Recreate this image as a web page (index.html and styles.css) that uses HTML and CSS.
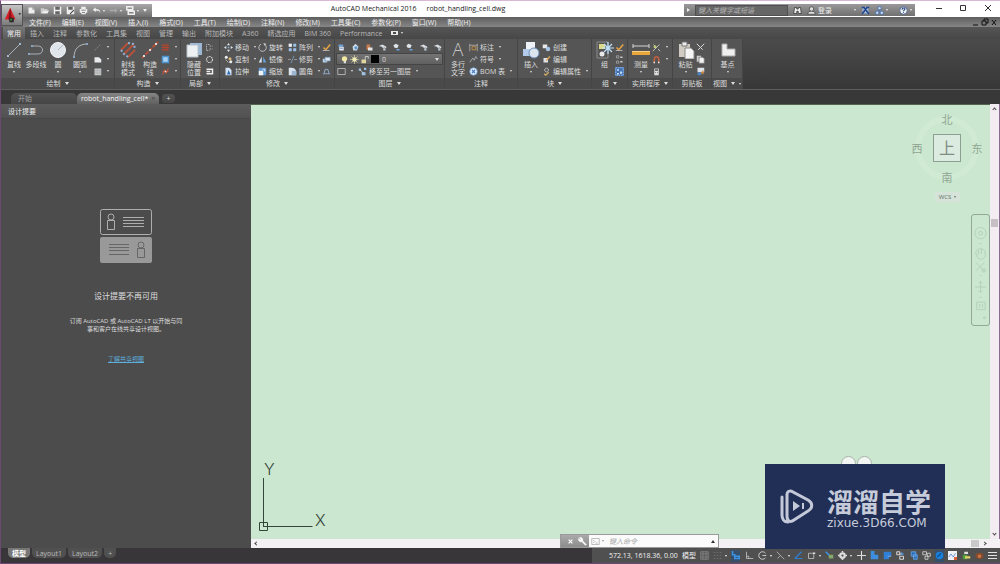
FILE: index.html
```html
<!DOCTYPE html>
<html lang="zh-CN">
<head>
  <meta charset="UTF-8">
  <meta name="viewport" content="width=device-width, initial-scale=1.0">
  <title>AutoCAD Mechanical 2016 - robot_handling_cell.dwg</title>
  <link rel="stylesheet" href="styles.css">
</head>
<body>
  <!-- icon sprite -->
  <svg class="sprite" aria-hidden="true">
    <symbol id="new" viewBox="0 0 12 12"><path d="M2 2h5l3 3v5H2z" fill="#eee"/><path d="M7 2v3h3" fill="#aaa"/></symbol>
    <symbol id="open" viewBox="0 0 12 12"><path d="M1 3h4l1 1h4v2H4L2 10H1z" fill="#ccc"/><path d="M4 6h8l-2 4H2z" fill="#eee"/></symbol>
    <symbol id="save" viewBox="0 0 12 12"><path d="M1 1h10v10H1z" fill="#eee"/><path d="M3 1h6v4H3zM3 7h6v4H3z" fill="#666"/></symbol>
    <symbol id="saveas" viewBox="0 0 12 12"><path d="M1 1h10v10H1z" fill="#eee"/><path d="M3 1h6v4H3z" fill="#666"/><path d="M5 10l5-5 1 1-5 5z" fill="#444"/></symbol>
    <symbol id="print" viewBox="0 0 12 12"><path d="M3 1h6v3h2v5H9v2H3V9H1V4h2z" fill="#eee"/><path d="M3 5h6v1H3zM4 8h4v1H4z" fill="#666"/></symbol>
    <symbol id="undo" viewBox="0 0 12 12"><path d="M1 5l4-3v2c4 0 6 2 6 5-1-2-3-3-6-3v2z" fill="#eee"/></symbol>
    <symbol id="redo" viewBox="0 0 12 12"><path d="M11 6L8 3v2H1v2h7v2z" fill="#aaa"/></symbol>
    <symbol id="work" viewBox="0 0 12 12"><path d="M1 1h8v4H1zM3 7h8v4H3z" fill="none" stroke="#eee" stroke-width="2"/></symbol>
    <symbol id="binoc" viewBox="0 0 12 12"><path d="M2 2h3v2h2V2h3l1 8H7V7H5v3H1z" fill="#eee" stroke="#333"/></symbol>
    <symbol id="user" viewBox="0 0 12 12"><circle cx="6" cy="4" r="3" fill="#ddd" stroke="#444"/><path d="M1 11c0-3 2-4 5-4s5 1 5 4z" fill="#ddd" stroke="#444"/></symbol>
    <symbol id="exchange" viewBox="0 0 12 12"><path d="M2 2h8v8H2z" fill="#9fb4d4"/><path d="M1 2h3l6 8h1M11 2H8L2 10H1" fill="none" stroke="#1f4690" stroke-width="2"/></symbol>
    <symbol id="a360" viewBox="0 0 12 12"><path d="M6 3v3M3 9l3-3 3 3" fill="none" stroke="#3f6cae"/><path d="M4 1h4v4H4zM1 7h4v4H1zM7 7h4v4H7z" fill="#cfdcf2" stroke="#3f6cae"/></symbol>
    <symbol id="help" viewBox="0 0 12 12"><circle cx="6" cy="6" r="5" fill="#eee" stroke="#35568f"/><path d="M4 5c0-3 4-3 4-1 0 1-2 1-2 3M6 8v1" fill="none" stroke="#24457f" stroke-width="1.4"/></symbol>

    <symbol id="line" viewBox="0 0 18 18"><path d="M3 15L15 3" stroke="#a9b0b6"/><path d="M2 14h2v2H2zM14 2h2v2h-2z" fill="#9fb9d4"/></symbol>
    <symbol id="pline" viewBox="0 0 18 18"><path d="M2 13h9c6 0 6-8 0-8H5" fill="none" stroke="#a9b0b6"/><path d="M4 4h2v2H4zM1 12h2v2H1z" fill="#8aa4bf"/></symbol>
    <symbol id="circle" viewBox="0 0 18 18"><circle cx="9" cy="9" r="7.5" fill="#dfe5ea" stroke="#f4f7fa"/><path d="M9 9l5-5" stroke="#a9b5c0"/></symbol>
    <symbol id="arc" viewBox="0 0 18 18"><path d="M3 16C3 8 8 3 16 3" fill="none" stroke="#b4bac0"/><path d="M2 15h2v2H2zM15 2h2v2h-2z" fill="#8aa4bf"/></symbol>
    <symbol id="cline" viewBox="0 0 12 12"><path d="M2 10l8-8" stroke="#8c8c8c" stroke-dasharray="3 1"/></symbol>
    <symbol id="poly" viewBox="0 0 12 12"><path d="M2 3h6l3 3v4H2z" fill="#e8eaec"/></symbol>
    <symbol id="hatch" viewBox="0 0 12 12"><path d="M2 2h9v9H2z" fill="#c7c9cb"/><path d="M2 5h9M2 8h9" stroke="#9b9ea1"/></symbol>
    <symbol id="rays" viewBox="0 0 18 18"><path d="M2 9l7-7M5 13L15 3M9 16l7-7" stroke="#b5503a" stroke-width="2"/><path d="M2 9l3 4 4 3M9 2l6 1 1 6" fill="none" stroke="#8fb0d8" stroke-dasharray="2 2" stroke-width="2"/></symbol>
    <symbol id="xline" viewBox="0 0 18 18"><path d="M1 17L17 1" stroke="#b5503a" stroke-width="2" stroke-dasharray="4 1"/><path d="M2 14h2v2H2zM8 8h2v2H8zM14 2h2v2h-2z" fill="#ddd"/></symbol>
    <symbol id="red1" viewBox="0 0 12 12"><path d="M1 3h10M1 6h10M1 9h10M4 1v10M8 1v10" stroke="#b5452e" stroke-width="1.3"/></symbol>
    <symbol id="bluebox" viewBox="0 0 12 12"><path d="M2 2h8v8H2z" fill="#a9d2f2" stroke="#4b94cf" stroke-width="2"/></symbol>
    <symbol id="red2" viewBox="0 0 12 12"><path d="M2 10l3-6 2 4 3-6M2 6h8" fill="none" stroke="#c4553c" stroke-width="1.5"/><path d="M5 5h2v2H5z" fill="#eee"/></symbol>
    <symbol id="hide" viewBox="0 0 18 18"><path d="M5 2h12v12H5z" fill="#9db8d3"/><path d="M2 4h11v12H2z" fill="#eef1f4" stroke="#b7c2cc"/></symbol>
    <symbol id="det1" viewBox="0 0 12 12"><path d="M6 2H2v8h4M6 4h4M6 8h4" fill="none" stroke="#ccc" stroke-dasharray="2 1"/></symbol>
    <symbol id="det2" viewBox="0 0 12 12"><circle cx="6" cy="6" r="4" fill="none" stroke="#ddd" stroke-width="1.5" stroke-dasharray="2 1"/></symbol>
    <symbol id="det3" viewBox="0 0 12 12"><path d="M2 3h8v6H2M2 6h5" fill="none" stroke="#eee" stroke-width="2"/></symbol>
    <symbol id="move" viewBox="0 0 12 12"><path d="M6 0l2 3H4zM6 12l2-3H4zM0 6l3-2v4zM12 6L9 4v4z" fill="#e3e9ef"/><path d="M5 5h2v2H5z" fill="#8ab4e0"/></symbol>
    <symbol id="copy" viewBox="0 0 12 12"><circle cx="3" cy="3" r="2" fill="#eee"/><circle cx="8" cy="5" r="2" fill="#d9b673"/><circle cx="9" cy="9" r="2" fill="#eee"/><path d="M2 6l4 4" stroke="#ccc"/></symbol>
    <symbol id="stretch" viewBox="0 0 12 12"><path d="M2 1h5l3 3v7H2z" fill="#d5e4f4"/><path d="M4 10l2-6 3 6z" fill="#2e6eb3"/></symbol>
    <symbol id="rotate" viewBox="0 0 12 12"><path d="M9 2a5 5 0 1 1-5-.5" fill="none" stroke="#b9bec3" stroke-width="1.3"/><path d="M7 0l4 1-2 3z" fill="#ccc"/></symbol>
    <symbol id="mirror" viewBox="0 0 12 12"><path d="M5 2v8H1z" fill="#dce6f0"/><path d="M7 2v8h4z" fill="#69a0d8"/></symbol>
    <symbol id="scale" viewBox="0 0 12 12"><path d="M1 1h10v10H1z" fill="#5d96d0"/><path d="M1 5h6v6H1z" fill="#f0f3f6"/><path d="M6 3h3v3" fill="none" stroke="#fff"/></symbol>
    <symbol id="array" viewBox="0 0 12 12"><path d="M1 1h4v4H1zM7 1h4v4H7zM1 7h4v4H1zM7 7h4v4H7z" fill="#9cc2ea"/><path d="M1 1h4v4H1z" fill="#eee"/></symbol>
    <symbol id="trim" viewBox="0 0 12 12"><path d="M0 6h4M8 6h4" stroke="#aaa"/><path d="M4 11l4-10" stroke="#7ea6d0"/></symbol>
    <symbol id="fillet" viewBox="0 0 12 12"><path d="M1 1h4c4 0 6 3 6 6v4H1z" fill="#dbe4ed"/><path d="M5 5h6v6H5z" fill="#9bb7d3"/></symbol>
    <symbol id="edit" viewBox="0 0 12 12"><path d="M2 6l3 3 6-7" fill="none" stroke="#e8a445" stroke-width="2"/><path d="M1 10h9" stroke="#ccc"/></symbol>
    <symbol id="cloud" viewBox="0 0 12 12"><path d="M1 5h6v5H1z" fill="#b7cfe7"/><path d="M4 3h7v5H4z" fill="#dfe8f0" stroke="#6f90b0"/></symbol>
    <symbol id="offset" viewBox="0 0 12 12"><path d="M1 9h10M3 9c0-8 6-8 6 0" fill="none" stroke="#8ca5bf" stroke-width="1.4"/></symbol>
    <symbol id="layer" viewBox="0 0 12 12"><path d="M2 2h6v3H2z" fill="#6fa3d8"/><path d="M3 5h6v5H3z" fill="#e3e9ee"/><path d="M4 7h4M8 3l2 2" stroke="#4b83bd"/></symbol>
    <symbol id="layer1" viewBox="0 0 12 12"><path d="M6 1l4 4-2 5H3L2 5z" fill="#cddbe8"/><path d="M4 6l3-2 2 3-3 2z" fill="#5b93cc"/></symbol>
    <symbol id="layer2" viewBox="0 0 12 12"><path d="M2 2h5v7H2z" fill="#c77b4c"/><path d="M4 6h6v4H4z" fill="#e4e4e4"/></symbol>
    <symbol id="layer3" viewBox="0 0 12 12"><path d="M1 4l5-2 5 3v2L8 6 7 7 5 5z" fill="#d9dee3"/><path d="M7 7h3v3H7z" fill="#c3ccd4"/></symbol>
    <symbol id="layer4" viewBox="0 0 12 12"><path d="M2 3l3-2 4 2-2 4-4-1z" fill="#dfe4e9"/><path d="M6 8h4v2H6z" fill="#6fa3d8"/></symbol>
    <symbol id="bulb" viewBox="0 0 12 12"><circle cx="6" cy="5" r="3.5" fill="#f3e9a2"/><path d="M5 8h3v3H5z" fill="#ddd"/></symbol>
    <symbol id="sun" viewBox="0 0 12 12"><path d="M6 0v12M0 6h12M2 2l8 8M10 2l-8 8" stroke="#cfcf9a"/><circle cx="6" cy="6" r="3" fill="#f1ecb8"/></symbol>
    <symbol id="lock" viewBox="0 0 12 12"><path d="M2 6h6v5H2z" fill="#e0d79c"/><path d="M7 6V2h4v3" fill="none" stroke="#ddd"/></symbol>
    <symbol id="rect" viewBox="0 0 12 12"><path d="M1 2h10v8H1z" fill="none" stroke="#c9c9c9"/></symbol>
    <symbol id="tolayer" viewBox="0 0 12 12"><path d="M1 2h3v3H1zM8 1h3v3H8zM5 7h5v4H5z" fill="#9dc2e6"/><path d="M3 4l4 4" stroke="#ddd"/></symbol>
    <symbol id="dim" viewBox="0 0 12 12"><path d="M1 1v10M11 1v10M1 3h10" stroke="#bbb"/><path d="M4 5h5v4H4z" fill="none" stroke="#d9a13e"/></symbol>
    <symbol id="sym" viewBox="0 0 12 12"><path d="M1 10l4-6 2 3 2-5 2 3" fill="none" stroke="#b8bdc2"/></symbol>
    <symbol id="bom" viewBox="0 0 12 12"><circle cx="6" cy="6" r="5" fill="#dfeaf8" stroke="#6b9ddb"/><path d="M4 4l4 4M8 4L4 8" stroke="#4a7dc4" stroke-width="1.5"/></symbol>
    <symbol id="insert" viewBox="0 0 18 18"><path d="M4 1h9v7H4z" fill="#eef1f5"/><path d="M1 8h8v7H1z" fill="#b2cbea"/><circle cx="12" cy="12" r="5" fill="#dce4ee" stroke="#6d90ba"/></symbol>
    <symbol id="create" viewBox="0 0 12 12"><path d="M1 2h6v5H1z" fill="#e6e9ec"/><circle cx="8" cy="8" r="3" fill="#a6c4e4"/></symbol>
    <symbol id="bedit" viewBox="0 0 12 12"><path d="M2 4h6v6H2z" fill="#dfe3e8"/><path d="M5 7l5-6 1 2-5 5z" fill="#e0a94c"/></symbol>
    <symbol id="attr" viewBox="0 0 12 12"><path d="M6 1l3 3-3 3-3-3z" fill="none" stroke="#ddd"/><path d="M3 9l2 2 4-4" fill="none" stroke="#d6b065" stroke-width="1.5"/></symbol>
    <symbol id="group" viewBox="0 0 18 18"><path d="M1 1h11v16H1z" fill="none" stroke="#8c8c8c"/><path d="M3 3h6v5H3z" fill="#dcd98a"/><circle cx="6" cy="13" r="2.5" fill="#e8e8e8"/><path d="M12 1v12M6 7h12M8 3l8 8M16 3l-8 8" stroke="#bfe2ff" stroke-width="1.2"/></symbol>
    <symbol id="g2" viewBox="0 0 12 12"><path d="M2 1h3v3H2zM2 8h3v3H2z" fill="none" stroke="#aaa"/><path d="M7 3h3M7 9h3" stroke="#ccc" stroke-width="2"/></symbol>
    <symbol id="g3" viewBox="0 0 12 12"><path d="M0 0h12v12H0z" fill="#3f71b5"/><path d="M1 1h10v10H1z" fill="none" stroke="#b7d3f5" stroke-dasharray="2 1"/><path d="M3 3h2v2H3zM7 6h2v3H7zM3 8h2v2H3z" fill="#fff"/></symbol>
    <symbol id="measure" viewBox="0 0 18 18"><path d="M1 5h16M1 3v4M17 3v4" stroke="#d5d5d5"/><path d="M0 10h18v4H0z" fill="#e8a63a"/><path d="M0 10h18v1H0z" fill="#f7cf85"/></symbol>
    <symbol id="pts" viewBox="0 0 12 12"><path d="M1 11L10 2M2 2l2 2M8 8l3 3" stroke="#ddd"/><circle cx="4" cy="5" r="2" fill="#bfc879"/></symbol>
    <symbol id="magnet" viewBox="0 0 12 12"><path d="M3 10V6c0-5 6-5 6 0v4" fill="none" stroke="#c5603f" stroke-width="2"/><path d="M2 9h2v2H2zM8 9h2v2H8z" fill="#eee"/></symbol>
    <symbol id="calc" viewBox="0 0 12 12"><path d="M3 2h6v9H3z" fill="#ddd"/><path d="M4 3h4v2H4zM4 7h1v1H4zM7 7h1v1H7z" fill="#555"/></symbol>
    <symbol id="paste" viewBox="0 0 18 18"><path d="M2 3h11v13H2z" fill="#cfcac2"/><path d="M5 1h5v4H5z" fill="#eee" stroke="#777"/><path d="M8 7h6l3 3v8H8z" fill="#f4f4f4" stroke="#888"/></symbol>
    <symbol id="cut" viewBox="0 0 12 12"><path d="M1 1l5 5 5-5M6 6L3 9M6 6l3 3" fill="none" stroke="#ddd" stroke-width="1.3"/></symbol>
    <symbol id="clip" viewBox="0 0 12 12"><path d="M1 1h6v8H1z" fill="#ccc"/><path d="M4 3h5l2 2v6H4z" fill="#f2f2f2" stroke="#777"/></symbol>
    <symbol id="match" viewBox="0 0 12 12"><path d="M2 1h9v6H2z" fill="#dfe3e8"/><path d="M2 7h5v4H2z" fill="#4d83c1"/><path d="M6 8l4-4v6z" fill="#d18a42"/></symbol>
    <symbol id="base" viewBox="0 0 18 18"><path d="M3 3h5v5h8v7H3z" fill="#f0f0f0" stroke="#aaa"/></symbol>

    <symbol id="grid" viewBox="0 0 12 12"><path d="M1 1h10v10H1zM1 4h10M1 8h10M4 1v10M8 1v10" fill="none" stroke="#8c8c8c"/></symbol>
    <symbol id="snap" viewBox="0 0 12 12"><path d="M1 2h10M1 6h10M1 10h10" stroke="#777" stroke-dasharray="2 2"/></symbol>
    <symbol id="dyn" viewBox="0 0 12 12"><path d="M2 0v5h4M5 7h6v3H5z" fill="none" stroke="#3a93e6" stroke-width="2"/></symbol>
    <symbol id="ortho" viewBox="0 0 12 12"><path d="M2 1v9h9M2 7h3v3" fill="none" stroke="#ccc"/></symbol>
    <symbol id="polar" viewBox="0 0 12 12"><path d="M10 3a5 5 0 1 0 0 6M6 6h5" fill="none" stroke="#ccc" stroke-width="1.3"/></symbol>
    <symbol id="iso" viewBox="0 0 12 12"><path d="M1 1l10 10M6 6L2 10" stroke="#aaa" stroke-width="1.3"/></symbol>
    <symbol id="otrack" viewBox="0 0 12 12"><path d="M1 10h10M1 10l9-9" stroke="#2e7fd6" stroke-width="1.5"/></symbol>
    <symbol id="osnap" viewBox="0 0 12 12"><path d="M2 3h7v7H2z" fill="none" stroke="#ccc"/><path d="M8 2h3v2H8z" fill="#ddd"/></symbol>
    <symbol id="ann" viewBox="0 0 12 12"><path d="M1 1l6 6" stroke="#3a93e6" stroke-width="2"/><path d="M5 5h6v5H5z" fill="#85a86a"/></symbol>
    <symbol id="gear" viewBox="0 0 12 12"><circle cx="6" cy="6" r="3" fill="none" stroke="#ddd" stroke-width="3"/><path d="M6 0v2M6 10v2M0 6h2M10 6h2" stroke="#ddd" stroke-width="2"/></symbol>
    <symbol id="plus" viewBox="0 0 12 12"><path d="M6 0v12M0 6h12" stroke="#ddd" stroke-width="1.5"/></symbol>
    <symbol id="sq1" viewBox="0 0 12 12"><path d="M1 0h5v5h5v6H1z" fill="#3c8ee0"/></symbol>
    <symbol id="sq2" viewBox="0 0 12 12"><path d="M1 1h10v6H8v4H1z" fill="#2f7fd4"/><path d="M6 7h5" stroke="#8fc1f4"/></symbol>
    <symbol id="sq3" viewBox="0 0 12 12"><path d="M1 1h4v4H1zM4 4h4M5 7h5v4H5z" fill="none" stroke="#ddd" stroke-width="1.3"/><path d="M7 2l3 3" stroke="#4b94dd" stroke-width="2"/></symbol>
    <symbol id="sq4" viewBox="0 0 12 12"><path d="M3 1h6v6H3zM6 5h5v6H6z" fill="#2e70ba" stroke="#6cabed"/></symbol>
    <symbol id="sq5" viewBox="0 0 12 12"><path d="M1 1h5v4H1zM7 3h4v4H7zM4 7h4v4H4z" fill="none" stroke="#ccc" stroke-width="1.2"/></symbol>
    <symbol id="hw" viewBox="0 0 12 12"><circle cx="6" cy="6" r="5" fill="#1b82dc"/><path d="M3 8l5-5" stroke="#0d5196" stroke-width="2"/></symbol>
    <symbol id="chart" viewBox="0 0 12 12"><path d="M0 0h12v12H0z" fill="#eef2f8"/><path d="M1 8l3-4 3 4 3-5" fill="none" stroke="#4a7bd0"/><path d="M8 8h4v4H8z" fill="#d9603a"/></symbol>
    <symbol id="bar" viewBox="0 0 12 12"><path d="M3 1h5v3H3z" fill="#ddd"/><path d="M1 5h6v6H1z" fill="#4f9c3c"/><path d="M4 7h7v3H4z" fill="#e3d16a"/></symbol>
    <symbol id="box" viewBox="0 0 12 12"><path d="M1 4l5-2 5 2v5l-5 2-5-2z" fill="#8a4a2c"/><path d="M4 5h4v4H4z" fill="#c87946"/></symbol>
    <symbol id="menu" viewBox="0 0 12 12"><path d="M0 2h12M0 6h12M0 10h12" stroke="#e2e2e2" stroke-width="1.5"/></symbol>
    <symbol id="wrench" viewBox="0 0 12 12"><path d="M1 2a3 3 0 0 0 4 4l5 5 1-1-5-5a3 3 0 0 0-4-4l2 2-1 1z" fill="#fff" stroke="#fff"/></symbol>
    <symbol id="prompt" viewBox="0 0 12 12"><path d="M1 2h10v8H1zM3 4l2 2-2 2M6 8h3" fill="none" stroke="#aaa"/></symbol>
  </svg>

  <header class="top">
    <button class="app-button" aria-label="应用程序菜单">
      <svg viewBox="0 0 22 22"><path d="M9 3l6 13H3z" fill="#d3222a"/><path d="M9 3l2 13H7z" fill="#8d0f16"/><path d="M8 14h5v5H8z" fill="#2a2a2a"/><path d="M9 15h2v2H9z" fill="#3f8a3f"/><path d="M18 9h3l-1.500 2z" fill="#222"/></svg>
    </button>
    <div class="top-rows">
      <div class="title-row">
        <div class="quick">
          <button><svg><use href="#new"/></svg></button>
          <button><svg><use href="#open"/></svg></button>
          <button><svg><use href="#save"/></svg></button>
          <button><svg><use href="#saveas"/></svg></button>
          <button><svg><use href="#print"/></svg></button>
          <button><svg><use href="#undo"/></svg><i class="caret"></i></button>
          <button><svg><use href="#redo"/></svg><i class="caret"></i></button>
          <button><svg><use href="#work"/></svg><i class="caret"></i></button>
          <button><i class="caret wide"></i></button>
        </div>
        <h1 class="title"><span>AutoCAD Mechanical 2016</span><span>robot_handling_cell.dwg</span></h1>
        <div class="info">
          <i class="caret right"></i>
          <input class="search" type="text" aria-label="搜索" placeholder="键入关键字或短语">
          <button><svg><use href="#binoc"/></svg></button>
          <button class="login"><svg><use href="#user"/></svg>登录</button>
          <button><i class="caret"></i></button>
          <button><svg><use href="#exchange"/></svg></button>
          <button><svg><use href="#a360"/></svg><i class="caret"></i></button>
          <button class="help"><svg><use href="#help"/></svg><i class="caret"></i></button>
        </div>
        <div class="window">
          <button aria-label="最小化"><svg viewBox="0 0 8 8"><path d="M1 4.500h6"/></svg></button>
          <button aria-label="最大化"><svg viewBox="0 0 8 8"><path d="M1.500 1.500h5v5h-5z"/></svg></button>
          <button aria-label="关闭"><svg viewBox="0 0 8 8"><path d="M1 1l6 6M7 1L1 7"/></svg></button>
        </div>
      </div>
      <nav class="menu-row">
        <button>文件(F)</button><button>编辑(E)</button><button>视图(V)</button><button>插入(I)</button><button>格式(O)</button><button>工具(T)</button><button>绘制(D)</button><button>注释(N)</button><button>修改(M)</button><button>工具集(C)</button><button>参数化(P)</button><button>窗口(W)</button><button>帮助(H)</button>
        <div class="doc-window">
          <button aria-label="最小化"><svg viewBox="0 0 8 8"><path d="M1 7h5"/></svg></button>
          <button aria-label="还原"><svg viewBox="0 0 8 8"><path d="M3 3V1h4v4H5M1 3h4v4H1z"/></svg></button>
          <button aria-label="关闭"><svg viewBox="0 0 8 8"><path d="M2 2l4 5M6 2L2 7"/></svg></button>
        </div>
      </nav>
    </div>
  </header>

  <nav class="ribbon-tabs">
    <button class="active">常用</button><button>插入</button><button>注释</button><button>参数化</button><button>工具集</button><button>视图</button><button>管理</button><button>输出</button><button>附加模块</button><button>A360</button><button>精选应用</button><button>BIM 360</button><button>Performance</button>
    <button class="ribbon-toggle" aria-label="功能区显示"><span></span><i class="caret"></i></button>
  </nav>

  <div class="ribbon">
    <section class="panel draw">
      <div class="tools">
        <button class="big"><svg><use href="#line"/></svg>直线<i class="caret"></i></button>
        <button class="big"><svg><use href="#pline"/></svg>多段线</button>
        <button class="big"><svg><use href="#circle"/></svg>圆<i class="caret"></i></button>
        <button class="big"><svg><use href="#arc"/></svg>圆弧<i class="caret"></i></button>
        <div class="stack">
          <button><svg><use href="#cline"/></svg><i class="caret"></i></button>
          <button><svg><use href="#poly"/></svg><i class="caret"></i></button>
          <button><svg><use href="#hatch"/></svg><i class="caret"></i></button>
        </div>
      </div>
      <h2>绘制<i class="caret wide"></i></h2>
    </section>

    <section class="panel construct">
      <div class="tools">
        <button class="big"><svg><use href="#rays"/></svg>射线<br>模式</button>
        <button class="big"><svg><use href="#xline"/></svg>构造<br>线</button>
        <div class="stack">
          <button><svg><use href="#red1"/></svg><i class="caret"></i></button>
          <button><svg><use href="#bluebox"/></svg><i class="caret"></i></button>
          <button><svg><use href="#red2"/></svg><i class="caret"></i></button>
        </div>
      </div>
      <h2>构造<i class="caret wide"></i></h2>
    </section>

    <section class="panel detail">
      <div class="tools">
        <button class="big"><svg><use href="#hide"/></svg>隐藏<br>位置</button>
        <div class="stack">
          <button><svg><use href="#det1"/></svg></button>
          <button><svg><use href="#det2"/></svg></button>
          <button><svg><use href="#det3"/></svg></button>
        </div>
      </div>
      <h2>局部<i class="caret wide"></i></h2>
    </section>

    <section class="panel modify">
      <div class="tools">
        <div class="stack">
          <button><svg><use href="#move"/></svg>移动<i class="caret"></i></button>
          <button><svg><use href="#copy"/></svg>复制<i class="caret"></i></button>
          <button><svg><use href="#stretch"/></svg>拉伸</button>
        </div>
        <div class="stack">
          <button><svg><use href="#rotate"/></svg>旋转</button>
          <button><svg><use href="#mirror"/></svg>镜像</button>
          <button><svg><use href="#scale"/></svg>缩放</button>
        </div>
        <div class="stack">
          <button><svg><use href="#array"/></svg>阵列<i class="caret"></i></button>
          <button><svg><use href="#trim"/></svg>修剪<i class="caret"></i></button>
          <button><svg><use href="#fillet"/></svg>圆角<i class="caret"></i></button>
        </div>
        <div class="stack">
          <button><svg><use href="#edit"/></svg></button>
          <button><svg><use href="#cloud"/></svg></button>
          <button><svg><use href="#offset"/></svg></button>
        </div>
      </div>
      <h2>修改<i class="caret wide"></i></h2>
    </section>

    <section class="panel layers">
      <div class="stack">
        <div class="layer-tools">
          <button><svg><use href="#layer"/></svg></button>
          <button><svg><use href="#layer1"/></svg></button>
          <button><svg><use href="#layer2"/></svg></button>
          <button><svg><use href="#layer3"/></svg></button>
          <button><svg><use href="#layer4"/></svg></button>
          <button><svg><use href="#layer4"/></svg></button>
          <button><svg><use href="#layer3"/></svg></button>
          <button><svg><use href="#layer3"/></svg></button>
        </div>
        <div class="layer-combo">
          <svg><use href="#bulb"/></svg>
          <svg><use href="#sun"/></svg>
          <svg><use href="#lock"/></svg>
          <span class="swatch"></span>
          <select aria-label="图层"><option>0</option></select>
          <i class="caret wide"></i>
        </div>
        <div class="layer-move">
          <button><svg><use href="#rect"/></svg><i class="caret"></i></button>
          <button><svg><use href="#tolayer"/></svg>移至另一图层<i class="caret"></i></button>
        </div>
      </div>
      <h2>图层<i class="caret wide"></i></h2>
    </section>

    <section class="panel annotate">
      <div class="tools">
        <button class="big"><span class="letter">A</span>多行<br>文字</button>
        <div class="stack">
          <button><svg><use href="#dim"/></svg>标注<i class="caret"></i></button>
          <button><svg><use href="#sym"/></svg>符号<i class="caret"></i></button>
          <button><svg><use href="#bom"/></svg>BOM 表<i class="caret"></i></button>
        </div>
      </div>
      <h2>注释</h2>
    </section>

    <section class="panel block">
      <div class="tools">
        <button class="big"><svg><use href="#insert"/></svg>插入<i class="caret"></i></button>
        <div class="stack">
          <button><svg><use href="#create"/></svg>创建</button>
          <button><svg><use href="#bedit"/></svg>编辑</button>
          <button><svg><use href="#attr"/></svg>编辑属性<i class="caret"></i></button>
        </div>
      </div>
      <h2>块<i class="caret wide"></i></h2>
    </section>

    <section class="panel groups">
      <div class="tools">
        <button class="big"><svg><use href="#group"/></svg>组</button>
        <div class="stack">
          <button><svg><use href="#edit"/></svg></button>
          <button><svg><use href="#g2"/></svg></button>
          <button><svg><use href="#g3"/></svg></button>
        </div>
      </div>
      <h2>组<i class="caret wide"></i></h2>
    </section>

    <section class="panel utils">
      <div class="tools">
        <button class="big"><svg><use href="#measure"/></svg>测量<i class="caret"></i></button>
        <div class="stack">
          <button><svg><use href="#pts"/></svg><i class="caret"></i></button>
          <button><svg><use href="#magnet"/></svg><i class="caret"></i></button>
          <button><svg><use href="#calc"/></svg></button>
        </div>
      </div>
      <h2>实用程序<i class="caret wide"></i></h2>
    </section>

    <section class="panel clipboard">
      <div class="tools">
        <button class="big"><svg><use href="#paste"/></svg>粘贴<i class="caret"></i></button>
        <div class="stack">
          <button><svg><use href="#cut"/></svg></button>
          <button><svg><use href="#clip"/></svg></button>
          <button><svg><use href="#match"/></svg></button>
        </div>
      </div>
      <h2>剪贴板</h2>
    </section>

    <section class="panel view">
      <div class="tools">
        <button class="big"><svg><use href="#base"/></svg>基点<i class="caret"></i></button>
      </div>
      <h2>视图<i class="caret wide"></i><i class="caret"></i></h2>
    </section>
  </div>

  <div class="file-tabs">
    <button class="file-tab">开始</button>
    <button class="file-tab current">robot_handling_cell*<span class="close">×</span></button>
    <button class="file-tab add" aria-label="新建">+</button>
  </div>

  <main class="workspace">
    <aside class="feed">
      <h2 class="feed-title">设计提要</h2>
      <div class="feed-body">
        <svg class="feed-icon" viewBox="0 0 52 54">
          <g fill="none" stroke="#aeaeae">
            <rect x=".5" y=".5" width="51" height="25" rx="2"/>
            <path d="M7.500 11.500h7v9h-7zM23 8.500h21M23 11.500h21M23 14.500h21M23 17.500h21"/>
            <circle cx="11" cy="8" r="3"/>
          </g>
          <rect y="28" width="52" height="26" rx="2" fill="#999"/>
          <g fill="none" stroke="#666">
            <path d="M37.500 39.500h7v9h-7zM9 35.500h20M9 38.500h20M9 41.500h20M9 45.500h20"/>
            <circle cx="41" cy="36" r="3"/>
          </g>
        </svg>
        <h3>设计提要不再可用</h3>
        <p>订阅 AutoCAD 或 AutoCAD LT 以开始与同<br>事和客户在线共享设计视图。</p>
        <a href="#">了解共享视图</a>
      </div>
    </aside>

    <section class="drawing">
      <div class="canvas">
        <svg class="ucs" viewBox="0 0 80 80" aria-label="UCS">
          <path d="M7.500 24v49M7.500 72.500h49M3.500 68.500h8v8h-8z" fill="none" stroke="#34453a"/>
          <text x="8" y="21">Y</text>
          <text x="59" y="72">X</text>
        </svg>
        <div class="compass">
          <span class="ring"></span>
          <span class="north">北</span>
          <span class="west">西</span>
          <button class="cube">上</button>
          <span class="east">东</span>
          <span class="south">南</span>
        </div>
        <button class="wcs">WCS<i class="caret"></i></button>
        <div class="navbar">
          <svg viewBox="0 0 18 112">
            <g fill="none" stroke="#b4d0b9">
              <circle cx="9" cy="17" r="6"/><circle cx="9" cy="17" r="2"/><path d="M8 28h2"/>
              <path d="M4 38c0-6 10-6 10 0v4c-3 4-8 3-9-1zM7 35v5M10 34v5"/>
              <path d="M4 48l9 9M13 48l-9 9M11 55h3v3h-3zM8 62h2"/>
              <path d="M9 68v12M3 74h12M7 70l2-2 2 2M7 78l2 2 2-2M8 85h2"/>
              <path d="M5 90h9v8H5zM8 92v4M11 92v4M12 106h3l-2 2z"/>
            </g>
          </svg>
        </div>
        <div class="ears"><span></span><span></span></div>
      </div>
      <div class="vscroll"><i class="arrow up"></i><span class="thumb"></span><i class="arrow down"></i></div>
      <div class="hscroll"><i class="arrow left"></i><span class="thumb"></span><i class="arrow right"></i></div>
      <div class="command">
        <div class="command-grip">
          <button aria-label="关闭"><svg viewBox="0 0 8 8"><path d="M1 1l6 6M7 1L1 7" stroke="#fff" stroke-width="2"/></svg></button>
          <button aria-label="自定义"><svg><use href="#wrench"/></svg></button>
        </div>
        <svg class="prompt"><use href="#prompt"/></svg><i class="caret"></i>
        <input type="text" aria-label="命令" placeholder="键入命令">
        <i class="caret flip"></i>
      </div>
      <div class="watermark">
        <svg viewBox="0 0 34 36"><path d="M8 33C4 33 2 30 2 26V8M7 24V6c0-4 3-5 6-3l15 8c5 3 5 8 0 11L14 31c-4 3-7 1-7-4V17" fill="none" stroke="#c3c9d8" stroke-width="3" stroke-linecap="round"/><path d="M13 12l7 5-7 5z" fill="#c3c9d8"/><path d="M23 14v6" stroke="#c3c9d8" stroke-width="2"/></svg>
        <div><strong>溜溜自学</strong><span>zixue.3D66.COM</span></div>
      </div>
    </section>
  </main>

  <footer class="bottom">
    <div class="layout-tabs">
      <button class="active">模型</button><button>Layout1</button><button>Layout2</button><button>+</button>
    </div>
    <div class="status">
      <span class="coords">572.13, 1618.36, 0.00</span>
      <button class="model">模型</button>
      <button><svg><use href="#grid"/></svg></button>
      <button><svg><use href="#snap"/></svg><i class="caret"></i></button>
      <button class="on"><svg><use href="#dyn"/></svg></button>
      <button><svg><use href="#ortho"/></svg></button>
      <button><svg><use href="#polar"/></svg><i class="caret"></i></button>
      <button><svg><use href="#iso"/></svg><i class="caret"></i></button>
      <button><svg><use href="#otrack"/></svg></button>
      <button><svg><use href="#osnap"/></svg><i class="caret"></i></button>
      <button><svg><use href="#ann"/></svg></button>
      <button><svg><use href="#gear"/></svg><i class="caret"></i></button>
      <button><svg><use href="#plus"/></svg></button>
      <button><svg><use href="#sq1"/></svg></button>
      <button><svg><use href="#sq2"/></svg></button>
      <button><svg><use href="#sq3"/></svg></button>
      <button><svg><use href="#sq4"/></svg></button>
      <button><svg><use href="#sq5"/></svg></button>
      <button class="on"><svg><use href="#hw"/></svg></button>
      <button><svg><use href="#chart"/></svg></button>
      <button><svg><use href="#bar"/></svg></button>
      <button><svg><use href="#box"/></svg></button>
      <button><svg><use href="#menu"/></svg></button>
    </div>
  </footer>
</body>
</html>
```

FILE: styles.css
```css
* {
  box-sizing: border-box;
}

body {
  margin: 0;
  height: 100vh;
  display: flex;
  flex-direction: column;
  overflow: hidden;
  border: 1px solid #6a4a72;
  border-top-color: #d9b8d6;
  border-right-width: 0;
  background: #3a393a;
  color: #dedede;
  font-family: "Open Sans", "Noto Sans CJK SC", sans-serif;
  font-size: 7px;
  line-height: 9px;
}

button, input, select {
  margin: 0;
  padding: 0;
  border: 0;
  background: none;
  color: inherit;
  font: inherit;
}

button {
  display: flex;
  align-items: center;
  justify-content: center;
  white-space: nowrap;
}

h1, h2, h3, p {
  margin: 0;
  font-size: inherit;
  font-weight: normal;
}

svg {
  display: block;
  flex: none;
  width: 9px;
  height: 9px;
}

.sprite {
  position: absolute;
  width: 0;
  height: 0;
}

/* small triangles */
.caret {
  flex: none;
  border: 1px solid transparent;
  border-top: 2px solid currentColor;
  border-bottom: 0;
}

.caret.wide {
  border-width: 3px 2px 0;
}

.caret.right {
  border: 2px solid transparent;
  border-left: 3px solid #eee;
  border-right: 0;
}

.caret.flip {
  border: 2px solid transparent;
  border-bottom: 3px solid #333;
  border-top: 0;
}

/* title and menus */
.top {
  display: flex;
  flex: none;
  height: 26px;
  background: linear-gradient(#fff 16px, #6d6d6d 16px);
}

.app-button {
  width: 22px;
  height: 22px;
  margin-top: 3px;
  background: linear-gradient(#c4c4c4, #7c7c7c);
  border: 1px solid #555;
}

.app-button svg {
  width: 20px;
  height: 20px;
}

.top-rows {
  flex: 1;
  min-width: 0;
}

.title-row {
  display: flex;
  height: 16px;
  color: #222;
}

.quick {
  display: flex;
  align-items: center;
  gap: 4px;
  width: 129px;
  height: 13px;
  margin-top: 3px;
  padding-left: 4px;
  background: linear-gradient(#a8a8a8, #6f6f6f);
  color: #eee;
}

.quick button,
.info button {
  gap: 2px;
}

.title {
  flex: 1;
  display: flex;
  justify-content: center;
  gap: 10px;
  padding: 3px 0 0 0;
}

.info {
  display: flex;
  align-items: center;
  width: 231px;
  height: 12px;
  margin-top: 3px;
  padding: 0 3px;
  gap: 5px;
  background: linear-gradient(#999, #707070);
  color: #eee;
}

.search {
  width: 93px;
  height: 11px;
  padding: 0 2px;
  background: #666;
  border: 1px solid #505050;
}

.search::placeholder {
  color: #b5b5b5;
  font-style: italic;
  opacity: 1;
}

.login {
  width: 58px;
  justify-content: flex-start;
}

.help {
  margin-left: 6px;
}

.window {
  display: flex;
  justify-content: space-around;
  width: 85px;
  padding: 1px 0 3px 12px;
}

.window svg,
.doc-window svg {
  width: 8px;
  height: 8px;
  fill: none;
  stroke: #333;
}

.menu-row {
  display: flex;
  align-items: center;
  gap: 11px;
  height: 10px;
  padding-left: 6px;
  background: linear-gradient(#5f5f5f, #868686);
  color: #eee;
}

.doc-window {
  display: flex;
  gap: 1px;
  margin-left: auto;
  padding-right: 2px;
}

.doc-window svg {
  stroke: #111;
}

/* ribbon tabs */
.ribbon-tabs {
  display: flex;
  flex: none;
  gap: 1px;
  height: 12px;
  background: linear-gradient(#555, #474747);
  color: #b8b8b8;
}

.ribbon-tabs button {
  padding: 0 4px;
}

.ribbon-tabs .active {
  margin-left: 2px;
  background: linear-gradient(#777, #5a5a5a);
  color: #f0f0f0;
}

.ribbon-toggle {
  gap: 3px;
}

.ribbon-tabs .ribbon-toggle {
  color: #e8e8e8;
}

.ribbon-toggle span {
  width: 7px;
  height: 4px;
  border: 1px solid #e8e8e8;
  border-width: 1px 2px;
}

/* ribbon panels */
.ribbon {
  display: flex;
  flex: none;
  height: 51px;
  background: linear-gradient(#4b4b4b, #373737);
  border-bottom: 1px solid #5e5e5e;
}

.panel {
  display: flex;
  flex-direction: column;
  flex: none;
  background: #555;
  border-right: 1px solid #454545;
}

.tools {
  display: flex;
  flex: 1;
  padding-left: 2px;
}

.panel h2 {
  display: flex;
  align-items: center;
  justify-content: center;
  gap: 4px;
  height: 11px;
  margin-top: auto;
  background: #4a4a4a;
}

.big {
  flex: 0 0 22px;
  flex-direction: column;
  justify-content: flex-start;
  padding-top: 2px;
  line-height: 8px;
}

.big svg {
  width: 18px;
  height: 18px;
  margin-bottom: 2px;
}

.big .caret {
  margin-top: 2px;
}

.letter {
  height: 20px;
  font-size: 18px;
  font-weight: 300;
  line-height: 16px;
  color: #c8c8c8;
}

.stack {
  display: flex;
  flex-direction: column;
  flex: 1;
  padding-top: 2px;
}

.stack button {
  justify-content: flex-start;
  gap: 2px;
  height: 12px;
}

.stack button .caret {
  margin-left: 3px;
}

.draw { width: 114px; }
.construct { width: 66px; }
.detail { width: 39px; }
.modify { width: 115px; }
.layers { width: 110px; }
.annotate { width: 73px; }
.block { width: 74px; }
.groups { width: 36px; }
.utils { width: 45px; }
.clipboard { width: 39px; }
.view { width: 31px; }

.draw .stack,
.modify .stack {
  padding-left: 2px;
}

.modify .stack:last-child {
  flex: 0 0 14px;
}

.groups .big,
.clipboard .big {
  flex-basis: 21px;
}

.view .big {
  flex-basis: 27px;
}

.layer-tools {
  display: flex;
  justify-content: space-around;
}

.layer-combo {
  display: flex;
  align-items: center;
  gap: 1px;
  height: 12px;
  margin: 0 1px;
  padding: 0 3px;
  background: linear-gradient(#747474, #606060);
  border: 1px solid #454545;
}

.swatch {
  width: 8px;
  height: 8px;
  margin-left: 1px;
  background: #000;
}

.layer-combo select {
  flex: 1;
  padding-left: 2px;
  appearance: none;
}

.layer-move {
  display: flex;
  gap: 5px;
  padding-left: 2px;
}

/* file tabs */
.file-tabs {
  display: flex;
  flex: none;
  align-items: flex-end;
  height: 14px;
  padding-left: 10px;
  background: #383838;
}

.file-tab {
  justify-content: flex-start;
  width: 66px;
  height: 11px;
  padding-left: 7px;
  background: linear-gradient(#525252, #454545);
  border-radius: 5px 5px 0 0;
  color: #a0a0a0;
}

.file-tab.current {
  width: 82px;
  padding-left: 4px;
  background: linear-gradient(#858585, #606060);
  color: #f5f5f5;
}

.close {
  margin-left: 3px;
  color: #444;
}

.file-tab.add {
  width: 13px;
  height: 9px;
  margin: 0 0 1px 3px;
  padding: 0;
  justify-content: center;
  border-radius: 4px;
  color: #ddd;
}

/* work area */
.workspace {
  display: flex;
  flex: 1;
  min-height: 0;
}

.feed {
  flex: 0 0 250px;
  background: #4c4c4c;
}

.feed-title {
  height: 15px;
  padding: 3px 7px;
  background: linear-gradient(#5c5c5c, #515151);
  border-bottom: 1px solid #484848;
  color: #eee;
}

.feed-body {
  display: flex;
  flex-direction: column;
  align-items: center;
  padding-top: 90px;
  text-align: center;
}

.feed-icon {
  width: 52px;
  height: 54px;
}

.feed-body h3 {
  margin-top: 27px;
  font-size: 8px;
  line-height: 12px;
}

.feed-body p {
  margin-top: 15px;
  font-size: 6px;
  line-height: 8px;
}

.feed-body a {
  margin-top: 22px;
  font-size: 6px;
  color: #5fb0dc;
}

.drawing {
  position: relative;
  flex: 1;
  display: grid;
  grid-template-columns: 1fr 10px;
  grid-template-rows: 1fr 9px;
  background: #f3f1f3;
}

.canvas {
  position: relative;
  background: #cbe7cf;
  border-top: 1px solid #57634f;
}

.ucs {
  position: absolute;
  left: 5px;
  bottom: 5px;
  width: 80px;
  height: 80px;
}

.ucs text {
  font-family: Inter, sans-serif;
  font-size: 16px;
  font-weight: 300;
  fill: #34453a;
}

.compass {
  position: absolute;
  top: 6px;
  right: 5px;
  display: grid;
  grid-template-columns: 16px 44px 16px;
  grid-template-rows: 16px 42px 16px;
  place-items: center;
  font-size: 11px;
  color: #8fa593;
}

.compass > * {
  z-index: 1;
}

/* pale ring behind the cube */
.compass > .ring {
  position: absolute;
  z-index: 0;
  width: 64px;
  height: 64px;
  border: 6px solid #d0ead3;
  border-radius: 50%;
}

.north,
.south {
  grid-column: 1 / -1;
}

.cube {
  width: 28px;
  height: 28px;
  background: #dcebe0;
  border: 1px solid #8ba090;
  font-size: 16px;
  color: #7f8d83;
}

.wcs {
  position: absolute;
  top: 87px;
  right: 30px;
  gap: 3px;
  width: 25px;
  height: 10px;
  background: #d5e3d8;
  font-size: 6px;
  color: #66736a;
}

.navbar {
  position: absolute;
  top: 109px;
  right: 0;
  border: 1px solid #93a897;
  border-radius: 3px;
}

.navbar svg {
  width: 17px;
  height: 110px;
}

.ears {
  position: absolute;
  right: 118px;
  bottom: 66px;
  display: flex;
  gap: 1px;
}

.ears span {
  width: 15px;
  height: 17px;
  background: #f2f6f2;
  border: 1px solid #a9b3aa;
  border-radius: 8px;
}

.vscroll {
  display: flex;
  flex-direction: column;
  align-items: center;
  background: #f3edf3;
  border-right: 1px solid #8a6b90;
  padding: 4px 0;
}

.vscroll .thumb {
  width: 7px;
  height: 8px;
  margin: 108px 0 auto;
  background: #c6bfc6;
}

.hscroll {
  display: flex;
  align-items: center;
  padding: 0 4px;
}

.hscroll .thumb {
  width: 8px;
  height: 7px;
  margin: 0 4px 0 auto;
  background: #c9c9c9;
}

.arrow {
  width: 3px;
  height: 3px;
  border: 1px solid #444;
  border-width: 1px 0 0 1px;
}

.arrow.up { transform: rotate(45deg); }
.arrow.down { transform: rotate(225deg); }
.arrow.left { transform: rotate(-45deg); }
.arrow.right { transform: rotate(135deg); }

.command {
  position: absolute;
  left: 309px;
  bottom: 0;
  display: flex;
  align-items: center;
  gap: 2px;
  width: 159px;
  height: 14px;
  padding-right: 3px;
  background: #fbfbfb;
  border: 1px solid #9a9a9a;
  color: #999;
}

.command-grip {
  display: flex;
  align-items: center;
  gap: 5px;
  height: 12px;
  padding: 0 2px 0 7px;
  background: linear-gradient(#aaa, #8c8c8c);
}

.command-grip button:first-child svg {
  width: 5px;
  height: 5px;
}

.command input {
  flex: 1;
  min-width: 0;
  padding-left: 3px;
}

.command input::placeholder {
  color: #aaa;
  font-style: italic;
  opacity: 1;
}

.watermark {
  position: absolute;
  right: 55px;
  bottom: -1px;
  display: flex;
  align-items: center;
  gap: 13px;
  width: 180px;
  height: 85px;
  padding-left: 15px;
  background: #212f56;
  color: #c6cbd9;
}

.watermark svg {
  width: 34px;
  height: 36px;
}

.watermark div {
  display: flex;
  flex-direction: column;
}

.watermark strong {
  font-family: "Noto Sans CJK SC", sans-serif;
  font-size: 26px;
  line-height: 32px;
}

.watermark span {
  font-family: "DejaVu Sans", sans-serif;
  font-size: 12px;
  line-height: 12px;
}

/* bottom bar */
.bottom {
  display: flex;
  flex: none;
  justify-content: space-between;
  height: 15px;
  background: #383638;
}

.layout-tabs {
  display: flex;
  gap: 2px;
  padding-left: 7px;
}

.layout-tabs button {
  height: 10px;
  padding: 0 4px;
  background: #505050;
  border-radius: 0 0 5px 5px;
  color: #bbb;
}

.layout-tabs .active {
  background: #777;
  color: #fff;
  font-weight: bold;
}

.status {
  display: flex;
  align-items: center;
  justify-content: space-between;
  width: 408px;
  padding: 0 3px 0 17px;
  background: #505050;
  color: #f0f0f0;
}

.status button {
  gap: 3px;
  height: 12px;
}

.status .on {
  background: #36506c;
}
```
